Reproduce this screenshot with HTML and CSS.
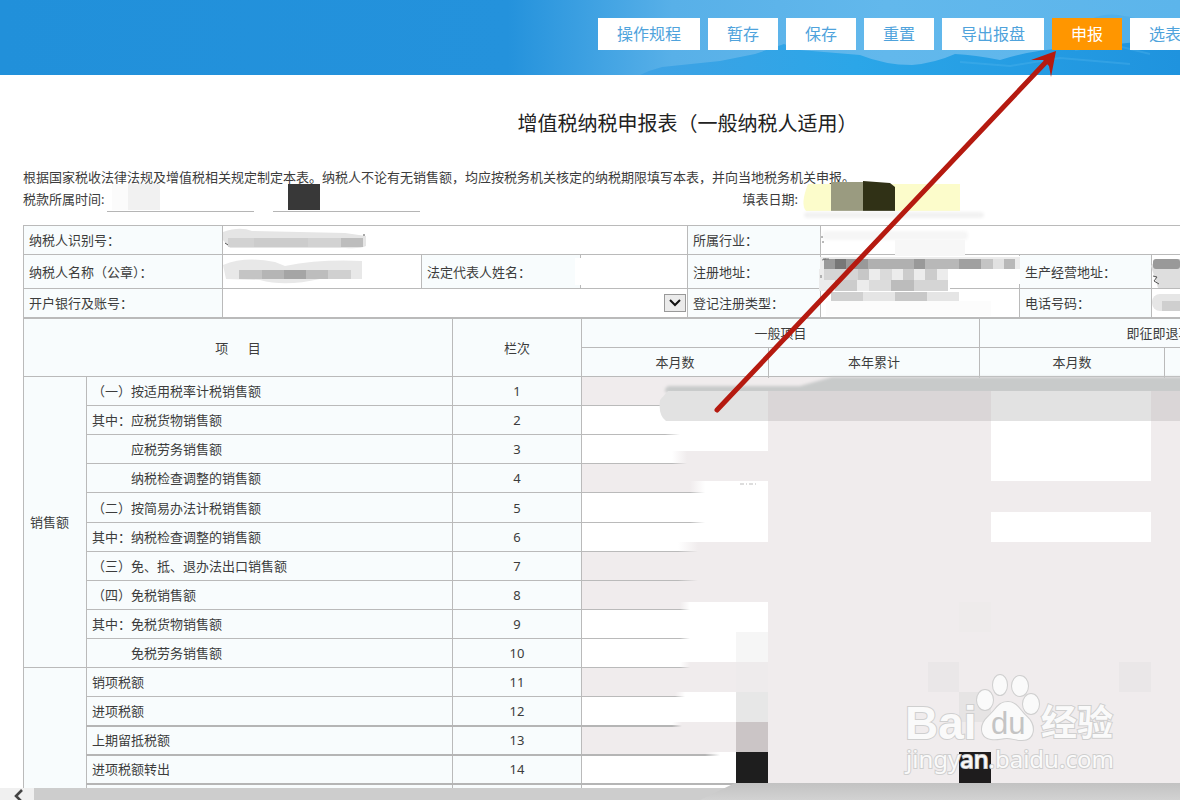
FILE: index.html
```html
<!DOCTYPE html>
<html lang="zh-CN">
<head>
<meta charset="utf-8">
<title>增值税纳税申报表</title>
<link rel="stylesheet" href="styles.css">
</head>
<body>
<div class="page">
  <header class="topbar">
    <svg class="waves" viewBox="0 0 1180 75" preserveAspectRatio="none" aria-hidden="true">
      <defs>
        <linearGradient id="sea" x1="0" y1="0" x2="1" y2="0"><stop offset="0" stop-color="#3fa2e4"/><stop offset=".4" stop-color="#2ba6e8"/><stop offset="1" stop-color="#1f93de"/></linearGradient>
      </defs>
      <path d="M1070 32Q1095 12 1118 15T1180 30V75H1070Z" fill="#4aabe8" opacity=".6"/>
      <path d="M640 75Q650 70 662 67L720 61L755 54L784 44L800 50L860 55Q885 65 912 65Q935 63 955 54Q975 55 1000 60Q1030 50 1070 48T1180 36V75Z" fill="url(#sea)"/>
      <path d="M960 62L1010 66L1060 58L1130 64M1075 50L1110 44L1150 54" fill="none" stroke="#58b8ee" stroke-width="2" opacity=".3"/>
    </svg>
    <nav class="actions">
      <button type="button" class="btn">操作规程</button>
      <button type="button" class="btn">暂存</button>
      <button type="button" class="btn">保存</button>
      <button type="button" class="btn">重置</button>
      <button type="button" class="btn">导出报盘</button>
      <button type="button" class="btn btn-primary">申报</button>
      <button type="button" class="btn">选表</button>
    </nav>
  </header>

  <main class="content">
    <div class="form">
      <h1 class="title">增值税纳税申报表（一般纳税人适用）</h1>
      <p class="note">根据国家税收法律法规及增值税相关规定制定本表。纳税人不论有无销售额，均应按税务机关核定的纳税期限填写本表，并向当地税务机关申报。</p>
      <div class="dates">
        <div class="period">
          <label for="from">税款所属时间:</label>
          <input id="from" class="line-input" type="text">
          <input class="line-input line-end" type="text" aria-label="税款所属时间止">
        </div>
        <div class="filled">
          <label for="filled">填表日期:</label>
          <input id="filled" class="date-input" type="text">
        </div>
      </div>

      <table class="grid info">
        <colgroup><col class="c199"><col class="c199"><col class="c159"><col class="c107"><col class="c133"><col class="c199"><col class="c132"><col></colgroup>
        <tr>
          <th><label for="taxid">纳税人识别号：</label></th><td colspan="3"><input id="taxid" type="text"></td>
          <th><label for="trade">所属行业：</label></th><td colspan="3"><input id="trade" type="text"></td>
        </tr>
        <tr class="tall">
          <th><label for="name">纳税人名称（公章）：</label></th><td><input id="name" type="text"></td>
          <th><label for="legal">法定代表人姓名：</label></th><td><input id="legal" type="text"></td>
          <th><label for="reg">注册地址：</label></th><td><input id="reg" type="text"></td>
          <th><label for="biz">生产经营地址：</label></th><td><input id="biz" type="text"></td>
        </tr>
        <tr>
          <th><label for="bank">开户银行及账号：</label></th>
          <td colspan="3">
            <div class="select-wrap">
              <select id="bank"><option></option></select>
              <svg class="select-arrow" viewBox="0 0 22 18" aria-hidden="true"><rect x=".5" y=".5" width="21" height="17" fill="#ebebeb" stroke="#999"/><path d="M6 6l5 5 5-5" fill="none" stroke="#111" stroke-width="2"/></svg>
            </div>
          </td>
          <th><label for="type">登记注册类型：</label></th><td><input id="type" type="text"></td>
          <th><label for="tel">电话号码：</label></th><td><input id="tel" type="text"></td>
        </tr>
      </table>

      <table class="grid data">
        <colgroup><col class="c63"><col class="c366"><col class="c129"><col class="c187"><col class="c211"><col class="c185"><col></colgroup>
        <thead>
          <tr><th colspan="2" rowspan="2">项&emsp;&ensp;目</th><th rowspan="2">栏次</th><th colspan="2">一般项目</th><th colspan="2">即征即退项目</th></tr>
          <tr><th>本月数</th><th>本年累计</th><th>本月数</th><th>本年累计</th></tr>
        </thead>
        <tbody>
          <tr><th rowspan="10">销售额</th><td class="item">（一）按适用税率计税销售额</td><td class="no">1</td><td class="lock"></td><td class="lock"></td><td class="lock"></td><td class="lock"></td></tr>
          <tr><td class="item">其中：应税货物销售额</td><td class="no">2</td><td></td><td class="lock"></td><td></td><td class="lock"></td></tr>
          <tr><td class="item sub">应税劳务销售额</td><td class="no">3</td><td></td><td class="lock"></td><td></td><td class="lock"></td></tr>
          <tr><td class="item sub">纳税检查调整的销售额</td><td class="no">4</td><td class="lock"></td><td class="lock"></td><td class="lock"></td><td class="lock"></td></tr>
          <tr class="roomy"><td class="item">（二）按简易办法计税销售额</td><td class="no">5</td><td></td><td class="lock"></td><td></td><td class="lock"></td></tr>
          <tr><td class="item">其中：纳税检查调整的销售额</td><td class="no">6</td><td></td><td class="lock"></td><td></td><td class="lock"></td></tr>
          <tr><td class="item">（三）免、抵、退办法出口销售额</td><td class="no">7</td><td class="lock"></td><td class="lock"></td><td class="lock"></td><td class="lock"></td></tr>
          <tr><td class="item">（四）免税销售额</td><td class="no">8</td><td class="lock"></td><td class="lock"></td><td class="lock"></td><td class="lock"></td></tr>
          <tr><td class="item">其中：免税货物销售额</td><td class="no">9</td><td></td><td class="lock"></td><td class="lock"></td><td class="lock"></td></tr>
          <tr><td class="item sub">免税劳务销售额</td><td class="no">10</td><td></td><td class="lock"></td><td class="lock"></td><td class="lock"></td></tr>
          <tr><th rowspan="5"></th><td class="item">销项税额</td><td class="no">11</td><td class="lock"></td><td class="lock"></td><td class="lock"></td><td class="lock"></td></tr>
          <tr class="thick"><td class="item">进项税额</td><td class="no">12</td><td></td><td class="lock"></td><td class="lock"></td><td class="lock"></td></tr>
          <tr class="thick"><td class="item">上期留抵税额</td><td class="no">13</td><td class="lock"></td><td class="lock"></td><td class="lock"></td><td class="lock"></td></tr>
          <tr class="thick"><td class="item">进项税额转出</td><td class="no">14</td><td></td><td class="lock"></td><td class="lock"></td><td class="lock"></td></tr>
          <tr><td class="item"></td><td class="no"></td><td></td><td class="lock"></td><td class="lock"></td><td class="lock"></td></tr>
        </tbody>
      </table>
    </div>
  </main>

  <div class="scrollbar" aria-hidden="true">
    <div class="scroll-left"><svg viewBox="0 0 10 12"><path d="M8 1L2 7l6 6" fill="none" stroke="#444" stroke-width="2.6"/></svg></div>
    <div class="scroll-thumb"></div>
  </div>

  <svg class="marks" width="1180" height="800" viewBox="0 0 1180 800" aria-hidden="true">
    <defs>
      <filter id="soft" x="-10%" y="-30%" width="120%" height="160%"><feGaussianBlur stdDeviation="1.5"/></filter>
      <linearGradient id="edge"><stop offset="0" stop-color="#fff" stop-opacity="0"/><stop offset="1" stop-color="#fff"/></linearGradient>
      <linearGradient id="edgep"><stop offset="0" stop-color="#f0eced" stop-opacity="0"/><stop offset="1" stop-color="#f0eced"/></linearGradient>
      <linearGradient id="foot" x1="0" y1="0" x2="0" y2="1"><stop offset="0" stop-color="#c2c2c2"/><stop offset="1" stop-color="#d2d2d2"/></linearGradient>
    </defs>

    <!-- tax period and filing date -->
    <rect x="112" y="184" width="16" height="26" fill="#fbfbfb"/>
    <rect x="128" y="184" width="32" height="26" fill="#f1f1f1"/>
    <rect x="288" y="184" width="32" height="26" fill="#383838"/>
    <path d="M808 184H960V211H806Q800 204 808 184Z" fill="#fcfccb"/>
    <rect x="831" y="182" width="32" height="29" fill="#9a9b80"/>
    <path d="M863 181L890 183L895 187V211H863Z" fill="#303116"/>
    <rect x="804" y="212" width="180" height="6" rx="3" fill="#f2f2f2" filter="url(#soft)"/>

    <!-- taxpayer id and name -->
    <path d="M223 232Q240 226 252 231L345 233L366 236V246Q360 249 345 248H230L223 240Z" fill="#e5e5e5"/>
    <rect x="228" y="238" width="26" height="9" fill="#d2d2d2"/><rect x="254" y="238" width="54" height="9" fill="#ccc"/><rect x="308" y="238" width="33" height="9" fill="#d2d2d2"/><rect x="341" y="238" width="22" height="9" fill="#bdbdbd"/>
    <path d="M225 243l3 2M363 235h2" stroke="#555"/>
    <path d="M223 265Q245 256 275 262L285 266Q320 259 362 261V279H320Q285 287 260 280L226 279Z" fill="#e8e8e8"/>
    <rect x="239" y="270" width="23" height="9" fill="#c4c4c4"/><rect x="262" y="270" width="22" height="9" fill="#b5b5b5"/><rect x="284" y="270" width="22" height="9" fill="#a5a5a5"/><rect x="306" y="270" width="22" height="9" fill="#bdbdbd"/><rect x="328" y="270" width="23" height="9" fill="#d0d0d0"/>
    <path d="M575 258H585V285H575Z" fill="#fff"/>

    <!-- industry and address -->
    <rect x="822" y="231" width="146" height="9" rx="4" fill="#f6f6f6" filter="url(#soft)"/>
    <rect x="895" y="240" width="70" height="16" fill="#f7f7f7"/>
    <path d="M822 256H1020V284H1018V288H950V300H822Z" fill="#fff"/>
    <path d="M820 257h200v12H820zM819 269h129v22H819z" fill="#ececec"/>
    <rect x="824" y="259" width="11" height="10" fill="#999"/><rect x="835" y="259" width="11" height="10" fill="#777"/><rect x="846" y="259" width="22" height="10" fill="#999"/><rect x="868" y="259" width="46" height="10" fill="#b0b0b0"/><rect x="914" y="259" width="11" height="10" fill="#999"/><rect x="925" y="259" width="34" height="10" fill="#b8b8b8"/><rect x="959" y="259" width="22" height="10" fill="#a0a0a0"/><rect x="981" y="259" width="12" height="10" fill="#c4c4c4"/><rect x="993" y="259" width="11" height="10" fill="#e1e1e1"/><rect x="1004" y="259" width="11" height="10" fill="#b8b8b8"/>
    <rect x="824" y="269" width="34" height="11" fill="#d5d5d5"/><rect x="858" y="269" width="11" height="11" fill="#c7c7c7"/><rect x="880" y="269" width="12" height="11" fill="#dadada"/><rect x="903" y="269" width="11" height="11" fill="#ccc"/><rect x="925" y="269" width="12" height="11" fill="#ccc"/>
    <rect x="835" y="280" width="22" height="11" fill="#ccc"/><rect x="869" y="280" width="22" height="11" fill="#dcdcdc"/><rect x="891" y="280" width="23" height="11" fill="#bcbcbc"/><rect x="914" y="280" width="34" height="11" fill="#d5d5d5"/>
    <rect x="831" y="292" width="32" height="9" fill="#d0d0d0"/><rect x="863" y="292" width="32" height="9" fill="#e5e5e5"/><rect x="895" y="292" width="32" height="9" fill="#c8c8c8"/><rect x="927" y="292" width="32" height="9" fill="#e5e5e5"/>
    <rect x="826" y="301" width="165" height="15" fill="#fcfcfc"/>
    <path d="M821 237h2M822 242h2M822 260l4-1M823 259h6M821 275v3" stroke="#777"/>
    <path d="M1156 259H1180V288H1158L1151 266Z" fill="#dedede"/><rect x="1153" y="259" width="27" height="10" rx="3" fill="#999"/><path d="M1153 276l4 1-3 4 5 3" fill="none" stroke="#555"/>
    <rect x="1152" y="294" width="40" height="17" rx="8" fill="#e6e6e6"/><rect x="1162" y="301" width="18" height="10" fill="#cfcfcf"/>

    <!-- monthly amounts -->
    <rect x="768" y="378" width="412" height="405" fill="#f0eced"/>
    <rect x="665" y="421" width="15" height="30" fill="url(#edge)"/><rect x="680" y="421" width="88" height="30" fill="#fff"/>
    <rect x="672" y="451" width="15" height="30" fill="url(#edgep)"/><rect x="687" y="451" width="81" height="30" fill="#f0eced"/>
    <rect x="690" y="481" width="15" height="61" fill="url(#edge)"/><rect x="705" y="481" width="63" height="61" fill="#fff"/>
    <rect x="678" y="542" width="20" height="60" fill="url(#edgep)"/><rect x="698" y="542" width="70" height="60" fill="#f0eced"/>
    <rect x="680" y="602" width="10" height="60" fill="url(#edge)"/><rect x="690" y="602" width="78" height="60" fill="#fff"/>
    <rect x="680" y="662" width="10" height="30" fill="url(#edgep)"/><rect x="690" y="662" width="78" height="30" fill="#f0eced"/>
    <rect x="675" y="692" width="10" height="30" fill="url(#edge)"/><rect x="685" y="692" width="83" height="30" fill="#fff"/>
    <rect x="672" y="722" width="10" height="30" fill="url(#edgep)"/><rect x="682" y="722" width="86" height="30" fill="#f0eced"/>
    <rect x="705" y="752" width="15" height="31" fill="url(#edge)"/><rect x="720" y="752" width="48" height="31" fill="#fff"/>
    <rect x="991" y="421" width="160" height="60" fill="#fff"/><rect x="991" y="512" width="160" height="30" fill="#fff"/>
    <path d="M740 484h18" stroke="#ddd" stroke-width="2" stroke-dasharray="4 2 1 2"/>
    <path d="M668 386H800L832 377H1190V393H672Q660 393 668 386Z" fill="#c8caca" filter="url(#soft)"/>
    <path d="M668 391H768V421H666Q658 415 660 400Z" fill="#e2e2e2"/>
    <rect x="768" y="391" width="223" height="30" fill="#dad6d7"/><rect x="991" y="391" width="160" height="30" fill="#e2e2e2"/><rect x="1151" y="391" width="29" height="30" fill="#dad6d7"/>
    <rect x="736" y="632" width="32" height="30" fill="#f6f6f6"/><rect x="736" y="662" width="32" height="30" fill="#eeebec"/><rect x="736" y="692" width="32" height="30" fill="#e7e7e7"/><rect x="736" y="722" width="32" height="30" fill="#cbc5c6"/><rect x="736" y="752" width="32" height="31" fill="#1e1e1e"/>
    <rect x="928" y="662" width="31" height="30" fill="#eae7e8"/><rect x="959" y="692" width="32" height="30" fill="#e6e4e4"/><rect x="959" y="752" width="32" height="31" fill="#1e1c1d"/><rect x="1119" y="662" width="32" height="30" fill="#eae7e8"/><rect x="959" y="602" width="32" height="30" fill="#eeebeb"/>
    <path d="M735 783H1180V800H700Z" fill="url(#foot)"/>

    <!-- watermark -->
    <g class="brand">
      <text x="905" y="739" class="brand-latin">Bai</text>
      <ellipse cx="985" cy="700" rx="8" ry="10"/><ellipse cx="1000" cy="685" rx="7" ry="10"/><ellipse cx="1020" cy="686" rx="8" ry="10"/><ellipse cx="1031" cy="704" rx="8" ry="10"/>
      <path d="M1008 702C1017 702 1020 711 1027 717C1036 725 1035 740 1022 740C1015 740 1012 738 1007 738C1001 738 998 740 991 739C979 737 980 724 988 717C996 710 998 702 1008 702Z"/>
      <text x="991" y="734" class="brand-du">du</text>
      <text x="1041" y="736" class="brand-cjk">经验</text>
      <text x="906" y="768" class="brand-url">jingyan.baidu.com</text>
    </g>

    <!-- pointer to the submit button -->
    <path d="M717 410L1045 63" stroke="#b51a10" stroke-width="5" stroke-linecap="round"/>
    <path d="M1056 51L1031 60L1043 60L1049 66L1051 77Z" fill="#b51a10"/>
  </svg>
</div>
</body>
</html>
```
FILE: styles.css
```css
* { box-sizing: border-box; }
body {
  margin: 0;
  color: #3c3c3c;
  background: #fff;
  font: 13px/20px "Noto Sans", "Noto Sans CJK SC", sans-serif;
}
button, input, select { font: inherit; color: inherit; border-radius: 0; }
.page {
  position: relative;
  display: flex;
  flex-direction: column;
  height: 100vh;
  overflow: hidden;
}
.topbar {
  position: relative;
  flex: none;
  padding: 18px 0 25px 598px;
  overflow: hidden;
  background: linear-gradient(90deg, #2190da 0, #2492dc 43%, #58b0e8 57%, #62b8ec 75%, #5cb5eb 100%);
}
.waves { position: absolute; inset: 0; width: 100%; height: 100%; }
.actions { position: relative; display: flex; gap: 8px; }
.btn {
  flex: none;
  height: 32px;
  padding: 0 19px;
  border: 0;
  background: #fff;
  color: #4fa3dc;
  font-size: 16px;
}
.btn-primary { background: #ff9600; color: #fff; }

.content { flex: 1; min-height: 0; overflow: hidden; padding: 0 23px; }
.form { min-width: 1329px; }
.title {
  margin: 0;
  padding: 34px 0 27px;
  color: #222;
  font-size: 20px;
  line-height: 30px;
  font-weight: 400;
  text-align: center;
}
.note { margin: 0; line-height: 22px; }
.dates { display: flex; gap: 322px; height: 37px; line-height: 23px; }
.period, .filled { display: flex; align-items: flex-start; }
.period label { margin-right: 3px; }
.line-input {
  width: 147px;
  height: 24px;
  padding: 0;
  border: 0;
  border-bottom: 1px solid #b5b5b5;
  background: transparent;
}
.line-end { margin-left: 19px; }
.date-input { width: 157px; height: 24px; padding: 0; border: 0; background: transparent; }

.grid { width: 1329px; table-layout: fixed; border-collapse: collapse; }
.grid th, .grid td { height: 29px; padding: 0 6px; border: 1px solid #bababa; font-weight: 400; }
.grid th { background: #f8fcfd; }
.info th { text-align: left; padding: 0 5px; white-space: nowrap; }
.info td { padding: 0; }
.info .tall th { height: 34px; }
.info input { display: block; width: 100%; height: 24px; border: 0; padding: 0 4px; background: transparent; }
.select-wrap { position: relative; display: flex; }
.select-wrap select { width: 100%; height: 24px; border: 0; background: transparent; appearance: none; }
.select-arrow { position: absolute; right: 1px; top: 3px; width: 22px; height: 18px; pointer-events: none; }
.c199 { width: 199px; }
.c159 { width: 159px; }
.c107 { width: 107px; }
.c133 { width: 133px; }
.c132 { width: 132px; }
.c63 { width: 63px; }
.c366 { width: 366px; }
.c129 { width: 129px; }
.c187 { width: 187px; }
.c211 { width: 211px; }
.c185 { width: 185px; }
.data { border-top: 1px solid #999; }
.data thead th { padding: 0; text-align: center; }
.data tbody th { text-align: left; }
.data .item, .data .no { background: #f8fcfd; }
.data .item { padding-left: 5px; white-space: nowrap; }
.data .sub { padding-left: 44px; }
.data .no { padding: 0; text-align: center; }
.data .lock { background: #f0eced; }
.data .roomy td { height: 30px; }
.data .thick td { height: 29px; border-bottom: 2px solid #b5b5b5; }

.scrollbar { display: flex; flex: none; height: 12px; background: #f0f0f0; overflow: hidden; }
.scroll-left { width: 34px; padding: 1px 0 0 14px; }
.scroll-left svg { display: block; width: 10px; height: 12px; overflow: visible; }
.scroll-thumb { flex: 1; background: #cdcdcd; }

.marks { position: absolute; left: 0; top: 0; pointer-events: none; }
.brand { fill: #fafafa; stroke: #cfcfcf; stroke-width: 2px; paint-order: stroke; }
.brand-latin { font: bold 46px "Liberation Sans", sans-serif; }
.brand-du { font: 31px "Liberation Sans", sans-serif; fill: #c4c4c4; stroke: none; }
.brand-cjk { font: bold 36px "Noto Sans CJK SC", sans-serif; }
.brand-url { font: 24px "Noto Sans", sans-serif; }
```
